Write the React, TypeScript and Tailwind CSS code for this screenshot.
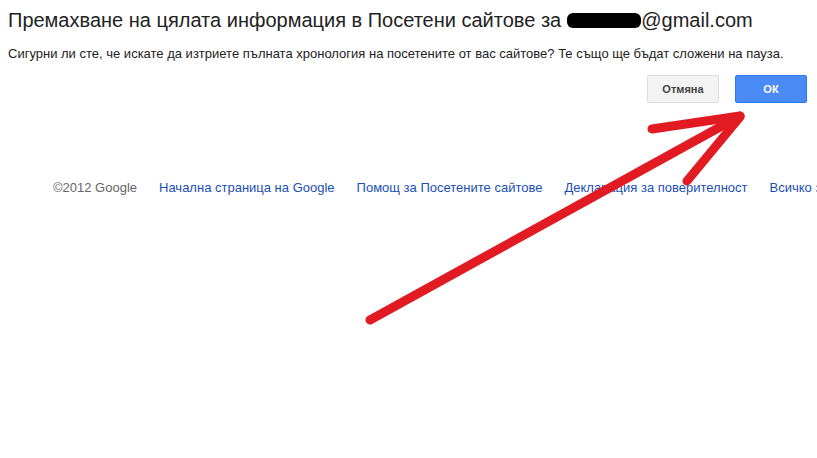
export default function App() {
  const links = ["Начална страница на Google", "Помощ за Посетените сайтове", "Декларация за поверителност", "Всичко за Google"];
  return (
    <div className="relative h-[458px] w-[817px] overflow-hidden bg-white font-['Liberation_Sans',Arial,sans-serif] text-[#222]">
      <div className="px-2 pt-[7px]">
        <h1 className="flex items-center whitespace-nowrap text-[20px] leading-[26px] text-[#222]">
          Премахване на цялата информация в Посетени сайтове за
          <span className="ml-[6px] inline-block h-[15px] w-[74px] rounded-[6px] bg-black" />
          @gmail.com
        </h1>
        <p className="mt-[12px] whitespace-nowrap text-[13px] leading-[17px]">
          Сигурни ли сте, че искате да изтриете пълната хронология на посетените от вас сайтове? Те също ще бъдат сложени на пауза.
        </p>
        <div className="mt-[13px] flex justify-end gap-4 pr-[2px]">
          <button className="h-[28px] w-[72px] rounded-[2px] border border-[#dcdcdc] bg-[#f3f3f3] text-[11px] font-bold text-[#444]">
            Отмяна
          </button>
          <button className="h-[28px] w-[72px] rounded-[2px] border border-[#3079ed] bg-[#4a8af4] text-[11px] font-bold text-white">
            ОК
          </button>
        </div>
      </div>
      <div className="mt-[76px] flex gap-[22px] whitespace-nowrap pl-[53px] text-[13px] leading-[17px]">
        <span className="text-[#666]">©2012 Google</span>
        {links.map((l) => (
          <a key={l} className="text-[#1c4fb5]">
            {l}
          </a>
        ))}
      </div>
      <svg className="pointer-events-none absolute left-0 top-0" width="817" height="458">
        <g stroke="#e21b23" strokeWidth="9" strokeLinecap="round" fill="none">
          <path d="M370 320 L740 116" />
          <path d="M652 129 L740 116" />
          <path d="M687 181 L740 117" />
        </g>
      </svg>
    </div>
  );
}
